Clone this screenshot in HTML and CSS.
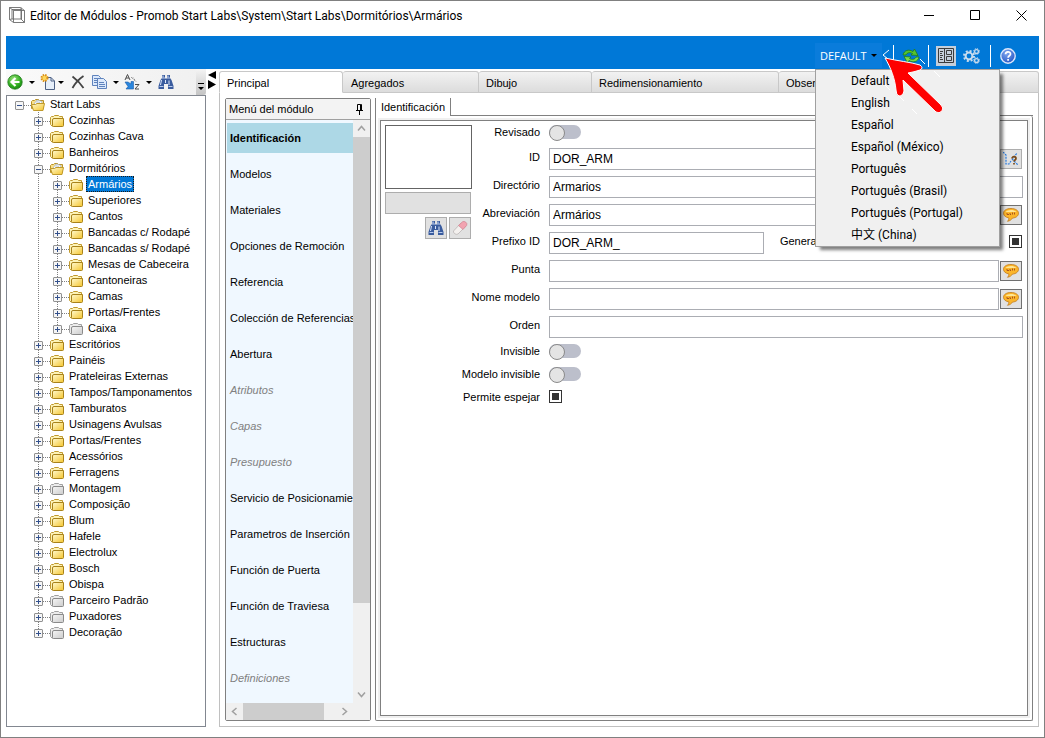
FILE: index.html
```html
<!DOCTYPE html>
<html lang="es">
<head>
    <meta charset="utf-8">
    <title>Editor de Módulos</title>
    <link rel="stylesheet" href="styles.css">
</head>
<body>

<svg class="symbols" aria-hidden="true">
    <defs>
        <linearGradient id="gold" x1="0" y1="0" x2="1" y2="1">
            <stop offset="0" stop-color="#fffad0"/>
            <stop offset="1" stop-color="#f5c52e"/>
        </linearGradient>
        <linearGradient id="silver" x1="0" y1="0" x2="1" y2="1">
            <stop offset="0" stop-color="#f6f6f6"/>
            <stop offset="1" stop-color="#cccccc"/>
        </linearGradient>
        <radialGradient id="green" cx="0.4" cy="0.3" r="0.8">
            <stop offset="0" stop-color="#9be07c"/>
            <stop offset="0.6" stop-color="#2fae1f"/>
            <stop offset="1" stop-color="#167a12"/>
        </radialGradient>
        <radialGradient id="blue" cx="0.4" cy="0.3" r="0.8">
            <stop offset="0" stop-color="#7fa6f0"/>
            <stop offset="1" stop-color="#1d4fc0"/>
        </radialGradient>
    </defs>
    <symbol id="folder" viewBox="0 0 14 12">
        <path d="M.5 9.500v-7l1-1h2l1-1h4l1 1h3v8l-1 1.500H2z" fill="#fdf3b8" stroke="#c19a2e"/>
        <path d="M2.500 5q0-1.500 1.500-1.500h9.500v7q0 1-1 1H3.500q-1 0-1-1z" fill="url(#gold)" stroke="#a8821a"/>
    </symbol>
    <symbol id="folder-gray" viewBox="0 0 14 12">
        <path d="M.5 9.500v-7l1-1h2l1-1h4l1 1h3v8l-1 1.500H2z" fill="#ececec" stroke="#a0a0a0"/>
        <path d="M2.500 5q0-1.500 1.500-1.500h9.500v7q0 1-1 1H3.500q-1 0-1-1z" fill="url(#silver)" stroke="#8a8a8a"/>
    </symbol>
    <symbol id="folder-open" viewBox="0 0 14 12">
        <path d="M.5 9.500v-7l1-1h2l1-1h3l1 1h4v8z" fill="#fbe28a" stroke="#b8922a"/>
        <path d="M3 5l3-4 5 1.500L10 7z" fill="#fff" stroke="#9fb0c4" stroke-width=".7"/>
        <path d="M5 4l3 .5M5.500 2.500l3.500 1" stroke="#8da0b8" stroke-width=".6"/>
        <path d="M2.500 11.500L.5 5.500h4L6 4.500h7.500l-1.500 7z" fill="url(#gold)" stroke="#c09a2c"/>
    </symbol>
    <symbol id="binoculars" viewBox="0 0 16 16">
        <path d="M4 1h3v3l1 1 1-1V1h3v3l1.500 2L15.500 12v3h-5.500v-5H6v5H.5v-3L2.500 6 4 4z" fill="#3a5c9e"/>
        <path d="M4 4h3M9 4h3M1.500 12.500h4M10.500 12.500h4" stroke="#b9cbee"/>
        <path d="M3.500 6l-1 5M11 6.500v4.500M5 1.500v2M10 1.500v2M7.500 6v3" stroke="#dbe6fb"/>
    </symbol>
    <symbol id="speech" viewBox="0 0 16 14">
        <path d="M8 .5c4.500 0 7.500 2 7.500 4.800 0 2.600-2.500 4.500-6 4.800-1 1.500-2.500 2.800-5 3.200 1-1 1.500-2 1.300-3.400C2.500 9.300.5 7.600.5 5.300.5 2.500 3.500.5 8 .5z" fill="#fbb52a" stroke="#c27a18" stroke-width=".8"/>
        <path d="M2.500 4C4 1.500 11 1 13.500 4z" fill="#ffe694"/>
        <path d="M4 5v1.500h2M7 5v1.500h1M9.500 4.500v2M11.500 4.500v2" stroke="#a8541c" fill="none"/>
    </symbol>
</svg>

<div class="window">
    <header class="titlebar">
        <svg class="app-icon" viewBox="0 0 16 16"><path d="M.5.5h11l4 3v12h-11l-4-3zM.5.5l4 3h11M4.500 3.500v12M3 2.500h9.500v9.500H3zM12 .5v11.500l3.500 3.500M.5 12.500L3 12" fill="none" stroke="#6c6c6c" stroke-width=".9"/></svg>
        <h1>Editor de Módulos - Promob Start Labs\System\Start Labs\Dormitórios\Armários</h1>
        <button type="button" aria-label="Minimizar"><svg viewBox="0 0 11 11"><path d="M0 5.500h10"/></svg></button>
        <button type="button" aria-label="Maximizar"><svg viewBox="0 0 11 11"><path d="M.5.5h9v9h-9z"/></svg></button>
        <button type="button" aria-label="Cerrar"><svg viewBox="0 0 11 11"><path d="M.5.5l10 10M10.500.5l-10 10"/></svg></button>
    </header>

    <nav class="bluebar">
        <div class="language">
            <button type="button" class="language-button">DEFAULT <span class="caret"></span></button>
            <ul class="language-menu">
                <li><button type="button">Default</button></li>
                <li><button type="button">English</button></li>
                <li><button type="button">Español</button></li>
                <li><button type="button">Español (México)</button></li>
                <li><button type="button">Português</button></li>
                <li><button type="button">Português (Brasil)</button></li>
                <li><button type="button">Português (Portugal)</button></li>
                <li><button type="button">中文 (China)</button></li>
            </ul>
            <svg class="pointer" viewBox="0 0 64 64" aria-hidden="true">
                <path d="M9 3L3 8l5 4M40 12l5 5M54 24l6 6M5 38l5 5M20 50l4 4M32 62l5 5" fill="none" stroke="#fff" stroke-width="1"/>
                <path d="M5 11C18 14 30 15 40 18q4 3 0 5-6 2-12 3L61 58q3 3 1 6-3 3-6 1L23 33l1 11q-1 5-5 5-3-1-3-6C15 32 11 21 5 11z" fill="#fe0000" stroke="#fff"/>
            </svg>
        </div>
        <span class="separator"></span>
        <button type="button" class="tool" aria-label="Actualizar">
            <svg viewBox="0 0 18 16"><path d="M1 7C2 2 7 1 11 3.500L12.500 1 16 7.500l-7-.5 1.500-1.500C8 4 5 4.500 4 7z" fill="#56c22f" stroke="#1f7d15" stroke-width=".8"/><path d="M17 9c-1 5-6 6-10 3.500L5.500 15 2 8.500l7 .5-1.500 1.500c2.500 1.500 5.500 1 6.500-1.500z" fill="#7bd94a" stroke="#1f7d15" stroke-width=".8"/></svg>
        </button>
        <span class="separator"></span>
        <button type="button" class="tool tool-active" aria-label="Propiedades">
            <svg viewBox="0 0 18 16" fill="none" stroke="#3c3c3c"><path d="M1.500.5h15v14h-15zM7.500.5v14M9.500 2.500h5v4h-5zM9.500 8.500h5v4h-5z"/><path d="M3 3.500h3M3 5.500h2M3 7.500h3M3 9.500h2M3 11.500h3"/></svg>
        </button>
        <button type="button" class="tool" aria-label="Configuración">
            <svg viewBox="0 0 18 16" fill="none" stroke="#c9dcee"><circle cx="6" cy="8" r="3.400" stroke-width="2"/><circle cx="6" cy="8" r="5" stroke-width="2" stroke-dasharray="2 1.930"/><circle cx="13.500" cy="3.500" r="1.900" stroke-width="1.300"/><circle cx="13.500" cy="3.500" r="2.900" stroke-width="1" stroke-dasharray="1.200 1.080"/><circle cx="13.500" cy="12.500" r="1.900" stroke-width="1.300"/><circle cx="13.500" cy="12.500" r="2.900" stroke-width="1" stroke-dasharray="1.200 1.080"/></svg>
        </button>
        <span class="separator"></span>
        <button type="button" class="tool tool-help" aria-label="Ayuda">
            <svg viewBox="0 0 16 16"><circle cx="8" cy="8" r="7.200" fill="url(#blue)" stroke="#dbe6fb" stroke-width="1.400"/><path d="M5.500 6.300c0-3.300 5-3.300 5-.3 0 1.800-2.400 1.800-2.400 3.800M8.100 11v1.800" fill="none" stroke="#fff" stroke-width="1.700"/></svg>
        </button>
    </nav>

    <div class="workspace">
        <aside class="explorer">
            <div class="toolbar">
                <button type="button" aria-label="Volver"><svg viewBox="0 0 16 16"><circle cx="8" cy="8" r="7.200" fill="url(#green)" stroke="#1d7a17" stroke-width=".8"/><path d="M12.500 8H5M8.500 4L4.500 8l4 4" fill="none" stroke="#fff" stroke-width="2.200"/></svg></button>
                <button type="button" class="drop" aria-label="Más"><span class="caret"></span></button>
                <button type="button" aria-label="Nuevo"><svg viewBox="0 0 16 16"><path d="M5.500 3.500h5.500l3.500 3.500v8.500h-9z" fill="#e6effa" stroke="#4d6185"/><path d="M11 3.500v3.500h3.500" fill="none" stroke="#4d6185"/><circle cx="4.500" cy="4" r="3" fill="#ffd75a" stroke="#d98f1a" stroke-width="2" stroke-dasharray="1.400 1"/></svg></button>
                <button type="button" class="drop drop-narrow" aria-label="Más"><span class="caret"></span></button>
                <button type="button" class="delete" aria-label="Eliminar"><svg viewBox="0 0 16 16"><path d="M2.500 2.500c4 3 8 7 11 11.500M13.500 2C9 5 5 9.500 2.500 14" fill="none" stroke="#444" stroke-width="1.800"/></svg></button>
                <button type="button" class="copy" aria-label="Copiar"><svg viewBox="0 0 16 16" fill="#dce9fb" stroke="#5f83bd"><path d="M1.500 1.500h6l2 2v8h-8z"/><path d="M3 4.500h4M3 6.500h4M3 8.500h4"/><path d="M6.500 4.500h6l3 3v7h-9z"/><path d="M8 8.500h5M8 10.500h6M8 12.500h6"/></svg></button>
                <button type="button" class="drop" aria-label="Más"><span class="caret"></span></button>
                <button type="button" aria-label="Ordenar"><svg viewBox="0 0 16 16"><path d="M1 6L3.500.5 6 6M2 4h3M11 10.500h4L11 15h4" fill="none" stroke="#4b4b4b"/><path d="M7 3l4 4M9 3.500l3 4" stroke="#777" stroke-dasharray="1 1"/><path d="M1 8h3l3 2V7.500h2.500V15H2l2-2.500z" fill="#2a86dd" stroke="#1b5aa8" stroke-width=".6"/></svg></button>
                <button type="button" class="drop drop-wide" aria-label="Más"><span class="caret"></span></button>
                <button type="button" aria-label="Buscar"><svg viewBox="0 0 16 16"><use href="#binoculars"/></svg></button>
                <button type="button" class="overflow" aria-label="Opciones"><svg viewBox="0 0 10 10"><path d="M2 1h6v1H2zM2 5h6L5 8z"/></svg></button>
            </div>
            <ul class="tree" id="tree"></ul>
        </aside>

        <div class="splitter">
            <svg viewBox="0 0 8 18"><path d="M8 0v8L0 4zM0 9v9l8-4.500z"/></svg>
        </div>

        <main class="editor">
            <div class="tabs">
                <button type="button" class="tab tab-active">Principal</button>
                <button type="button" class="tab tab-aggregates">Agregados</button>
                <button type="button" class="tab tab-drawing">Dibujo</button>
                <button type="button" class="tab tab-resize">Redimensionamiento</button>
                <button type="button" class="tab tab-notes">Obser</button>
            </div>

            <div class="editor-body">
                <section class="module-menu">
                    <h2>Menú del módulo
                        <svg viewBox="0 0 9 11"><path d="M2.500 6.500v-6h3v6M5.500.5h1v6M1 6.500h7M4.500 7v4" fill="none" stroke="#000"/></svg>
                    </h2>
                    <div class="module-scroll">
                        <ul>
                            <li><a href="#" class="current">Identificación</a></li>
                            <li><a href="#">Modelos</a></li>
                            <li><a href="#">Materiales</a></li>
                            <li><a href="#">Opciones de Remoción</a></li>
                            <li><a href="#">Referencia</a></li>
                            <li><a href="#">Colección de Referencias</a></li>
                            <li><a href="#">Abertura</a></li>
                            <li><a href="#" class="disabled">Atributos</a></li>
                            <li><a href="#" class="disabled">Capas</a></li>
                            <li><a href="#" class="disabled">Presupuesto</a></li>
                            <li><a href="#">Servicio de Posicionamie</a></li>
                            <li><a href="#">Parametros de Inserción</a></li>
                            <li><a href="#">Función de Puerta</a></li>
                            <li><a href="#">Función de Traviesa</a></li>
                            <li><a href="#">Estructuras</a></li>
                            <li><a href="#" class="disabled">Definiciones</a></li>
                        </ul>
                        <div class="scrollbar scrollbar-y">
                            <svg viewBox="0 0 17 17"><path d="M5 10.500l3.500-4 3.500 4"/></svg>
                            <span class="thumb"></span>
                            <svg viewBox="0 0 17 17"><path d="M5 6.500l3.500 4 3.500-4"/></svg>
                        </div>
                        <div class="scrollbar scrollbar-x">
                            <svg viewBox="0 0 17 17"><path d="M10.500 5l-4 3.500 4 3.500"/></svg>
                            <span class="thumb"></span>
                            <svg viewBox="0 0 17 17"><path d="M6.500 5l4 3.500-4 3.500"/></svg>
                        </div>
                    </div>
                </section>

                <section class="identity">
                    <div class="subtabs">
                        <button type="button">Identificación</button>
                    </div>
                    <div class="identity-frame">
                        <div class="identity-content">
                            <div class="thumbnail">
                                <div class="preview"></div>
                                <div class="preview-name"></div>
                                <div class="preview-actions">
                                    <button type="button" aria-label="Buscar imagen"><svg viewBox="0 0 16 16"><use href="#binoculars"/></svg></button>
                                    <button type="button" aria-label="Borrar imagen"><svg viewBox="0 0 16 16"><path d="M1.500 11L9 3l4.500 3.500-7.500 7.500q-2 1-3.500-.5T1.500 11z" fill="#f3f0ee" stroke="#b3aeae" stroke-width=".7"/><path d="M6.500 5.500L10.500 1.800q1.500-1 3.300.4t.8 3.300L11 9.500z" fill="#f2a3b0" stroke="#d0808e" stroke-width=".7"/></svg></button>
                                </div>
                            </div>
                            <form class="fields">
                                <div class="field switch-field">
                                    <label for="revisado">Revisado</label>
                                    <input type="checkbox" class="switch" id="revisado">
                                </div>
                                <div class="field">
                                    <label for="module-id">ID</label>
                                    <input type="text" id="module-id" value="DOR_ARM">
                                    <button type="button" class="flat" aria-label="Generar ID"><svg viewBox="0 0 16 14"><path d="M0 0l3 3v9h3l2-3M9 8l5-7M9 7l6 6" fill="none" stroke="#277be0" stroke-width="1.200" stroke-dasharray="2 1"/><path d="M9 6.500c0-2.500 4-2.500 4 0 0 1.500-2 1.500-2 3M11 11v1.500" fill="none" stroke="#7a4a18" stroke-width="1.700"/></svg></button>
                                </div>
                                <div class="field">
                                    <label for="directorio">Directório</label>
                                    <input type="text" id="directorio" value="Armarios">
                                </div>
                                <div class="field">
                                    <label for="abreviacion">Abreviación</label>
                                    <input type="text" id="abreviacion" value="Armários">
                                    <button type="button" aria-label="Traducir"><svg viewBox="0 0 16 14"><use href="#speech"/></svg></button>
                                </div>
                                <div class="field">
                                    <label for="prefixo">Prefixo ID</label>
                                    <input type="text" class="short" id="prefixo" value="DOR_ARM_">
                                    <label for="genera" class="auto-label">Genera</label>
                                    <input type="checkbox" class="box" id="genera" checked>
                                </div>
                                <div class="field">
                                    <label for="punta">Punta</label>
                                    <input type="text" id="punta">
                                    <button type="button" aria-label="Traducir"><svg viewBox="0 0 16 14"><use href="#speech"/></svg></button>
                                </div>
                                <div class="field">
                                    <label for="nome">Nome modelo</label>
                                    <input type="text" id="nome">
                                    <button type="button" aria-label="Traducir"><svg viewBox="0 0 16 14"><use href="#speech"/></svg></button>
                                </div>
                                <div class="field">
                                    <label for="orden">Orden</label>
                                    <input type="text" id="orden">
                                </div>
                                <div class="field switch-field">
                                    <label for="invisible">Invisible</label>
                                    <input type="checkbox" class="switch" id="invisible">
                                </div>
                                <div class="field switch-field">
                                    <label for="modelo-invisible">Modelo invisible</label>
                                    <input type="checkbox" class="switch" id="modelo-invisible">
                                </div>
                                <div class="field switch-field">
                                    <label for="espejar">Permite espejar</label>
                                    <input type="checkbox" class="box" id="espejar" checked>
                                </div>
                            </form>
                        </div>
                    </div>
                </section>
            </div>
        </main>
    </div>
</div>

<script>
    const folders = [
        { name: 'Start Labs', open: true, children: [
            { name: 'Cozinhas' },
            { name: 'Cozinhas Cava' },
            { name: 'Banheiros' },
            { name: 'Dormitórios', open: true, children: [
                { name: 'Armários', selected: true },
                { name: 'Superiores' },
                { name: 'Cantos' },
                { name: 'Bancadas c/ Rodapé' },
                { name: 'Bancadas s/ Rodapé' },
                { name: 'Mesas de Cabeceira' },
                { name: 'Cantoneiras' },
                { name: 'Camas' },
                { name: 'Portas/Frentes' },
                { name: 'Caixa', gray: true }
            ] },
            { name: 'Escritórios' },
            { name: 'Painéis' },
            { name: 'Prateleiras Externas' },
            { name: 'Tampos/Tamponamentos' },
            { name: 'Tamburatos' },
            { name: 'Usinagens Avulsas' },
            { name: 'Portas/Frentes' },
            { name: 'Acessórios' },
            { name: 'Ferragens' },
            { name: 'Montagem', gray: true },
            { name: 'Composição' },
            { name: 'Blum' },
            { name: 'Hafele' },
            { name: 'Electrolux' },
            { name: 'Bosch' },
            { name: 'Obispa' },
            { name: 'Parceiro Padrão', gray: true },
            { name: 'Puxadores', gray: true },
            { name: 'Decoração', gray: true }
        ] }
    ];

    function renderFolder(folder) {
        const icon = folder.open ? 'folder-open' : folder.gray ? 'folder-gray' : 'folder';
        const children = folder.children ? '<ul>' + folder.children.map(renderFolder).join('') + '</ul>' : '';
        return '<li><div class="node">' +
            '<button type="button" class="expander' + (folder.open ? ' open' : '') + '" aria-label="' + folder.name + '"></button>' +
            '<svg viewBox="0 0 14 12"><use href="#' + icon + '"/></svg>' +
            '<span class="name' + (folder.selected ? ' selected' : '') + '">' + folder.name + '</span>' +
            '</div>' + children + '</li>';
    }

    document.getElementById('tree').innerHTML = folders.map(renderFolder).join('');
</script>

</body>
</html>
```
FILE: styles.css
```css
* {
    box-sizing: border-box;
}

body {
    margin: 0;
    font-family: "Liberation Sans", Arial, sans-serif;
    font-size: 11px;
    line-height: 16px;
    color: #000;
    background-color: #fff;
}

button, input {
    margin: 0;
    padding: 0;
    border: none;
    background: none;
    font: inherit;
    color: inherit;
}

ul {
    list-style: none;
    margin: 0;
    padding: 0;
}

svg {
    display: block;
    flex: none;
}

.symbols {
    position: absolute;
    width: 0;
    height: 0;
}

.window {
    display: flex;
    flex-direction: column;
    height: 100vh;
    padding: 0 5px 10px;
    border: 1px solid #808080;
}

/* title bar */
.titlebar {
    display: flex;
    align-items: flex-start;
    height: 35px;
    margin-right: -5px;
}

.app-icon {
    width: 16px;
    height: 16px;
    margin: 6px 5px 0 3px;
}

.titlebar h1 {
    flex: 1;
    margin: 0;
    font-family: Roboto, "Noto Sans", sans-serif;
    font-size: 12px;
    font-weight: normal;
    line-height: 30px;
    white-space: nowrap;
}

.titlebar button {
    display: flex;
    align-items: center;
    justify-content: center;
    width: 46px;
    height: 29px;
}

.titlebar button svg {
    width: 11px;
    height: 11px;
    fill: none;
    stroke: #000;
}

/* blue bar */
.bluebar {
    display: flex;
    align-items: center;
    justify-content: flex-end;
    height: 33px;
    padding: 6px 21px 0 0;
    background-color: #0078d7;
}

.caret {
    display: block;
    border: 3px solid transparent;
    border-top-color: #000;
    border-bottom-width: 0;
}

.language {
    position: relative;
    margin-right: 11px;
    font-family: Roboto, "Noto Sans", "Noto Sans CJK SC", sans-serif;
    font-size: 12px;
}

.language-button {
    display: flex;
    align-items: center;
    gap: 4px;
    width: 67px;
    height: 25px;
    padding-left: 5px;
    font-family: "Open Sans", "Noto Sans", sans-serif;
    font-size: 11px;
    color: #fff;
    background-color: #0a7cdb;
}

.language-menu {
    position: absolute;
    z-index: 2;
    top: 26px;
    left: 0;
    width: 185px;
    border: 1px solid #a0a0a0;
    background-color: #f0f0f0;
    box-shadow: 4px 4px 3px -1px rgba(0, 0, 0, 0.5);
}

.language-menu button {
    display: block;
    width: 100%;
    height: 22px;
    padding-left: 35px;
    text-align: left;
    white-space: nowrap;
}

.pointer {
    position: absolute;
    z-index: 3;
    top: 4px;
    left: 65px;
    width: 64px;
    height: 64px;
    overflow: visible;
}

.separator {
    width: 1px;
    height: 22px;
    background-color: #fff;
}

.tool {
    display: flex;
    align-items: center;
    justify-content: center;
    width: 20px;
    height: 20px;
    margin: 0 7px;
}

.tool svg {
    width: 18px;
    height: 16px;
}

.tool + .tool {
    margin-left: -1px;
    margin-right: 8px;
}

.tool-active {
    background-color: #c6cfda;
}

.tool-help {
    margin-right: 0;
}

/* explorer */
.workspace {
    display: flex;
    flex: 1;
    min-height: 0;
}

.explorer {
    display: flex;
    flex-direction: column;
    width: 200px;
}

.toolbar {
    display: flex;
    align-items: center;
    height: 26px;
    padding-left: 1px;
    background: linear-gradient(to right, #fafafa, #f0f0f0);
}

.toolbar button {
    width: 16px;
    height: 16px;
}

.toolbar .drop {
    display: flex;
    align-items: center;
    justify-content: center;
    width: 17px;
}

.toolbar .drop-narrow {
    width: 9px;
}

.toolbar .drop-wide {
    width: 18px;
}

.toolbar .delete {
    margin: 0 5px;
}

.toolbar svg {
    width: 16px;
    height: 16px;
}

.toolbar .overflow {
    display: flex;
    align-items: flex-end;
    align-self: stretch;
    width: 10px;
    height: auto;
    margin-left: auto;
    padding-bottom: 3px;
    border-radius: 0 0 3px 0;
    background: linear-gradient(#f4f4f4, #c4c4c4);
}

.overflow svg {
    width: 10px;
    height: 10px;
}

.tree {
    flex: 1;
    overflow: hidden;
    padding: 0 0 0 8px;
    border: 1px solid #828790;
    background-color: #fff;
}

.tree ul {
    margin-left: 4px;
    padding-left: 15px;
}

.tree ul li {
    background: repeating-linear-gradient(#808080 0 1px, transparent 1px 2px) 4px 0 / 1px 100% no-repeat;
}

.tree ul li:last-child {
    background-size: 1px 9px;
}

.node {
    display: flex;
    align-items: center;
    height: 16px;
}

.node svg {
    width: 14px;
    height: 12px;
    margin-top: 2px;
}

.expander {
    flex: none;
    width: 9px;
    height: 9px;
    margin-top: 2px;
    border: 1px solid #919191;
    border-radius: 1px;
    background:
        linear-gradient(#33508c, #33508c) center / 5px 1px no-repeat,
        linear-gradient(#33508c, #33508c) center / 1px 5px no-repeat,
        #f6f6f6;
}

.expander.open {
    background: linear-gradient(#33508c, #33508c) center / 5px 1px no-repeat, #f6f6f6;
}

.expander + svg {
    margin-left: 7px;
}

.node::before {
    content: "";
    order: 1;
    width: 7px;
    height: 1px;
    margin: 2px -7px 0 0;
    background: repeating-linear-gradient(to right, #808080 0 1px, transparent 1px 2px);
}

.node svg, .node .name {
    order: 2;
}

.name {
    padding: 0 2px;
    margin-left: 3px;
    line-height: 16px;
    white-space: nowrap;
}

.name.selected {
    color: #fff;
    background-color: #0078d7;
    outline: 1px dotted #1a1a1a;
    outline-offset: -1px;
}

.splitter {
    width: 13px;
    padding: 2px 0 0 2px;
}

.splitter svg {
    width: 8px;
    height: 18px;
}

/* editor */
.editor {
    display: flex;
    flex: 1;
    flex-direction: column;
    min-width: 0;
}

.tabs {
    display: flex;
    height: 24px;
    padding-top: 2px;
}

.tab {
    width: 124px;
    padding: 1px 0 0 7px;
    border: 1px solid #c8c8c8;
    border-left: none;
    border-radius: 3px 3px 0 0;
    text-align: left;
    white-space: nowrap;
    overflow: hidden;
    background: linear-gradient(#f2f2f2, #dcdcdc);
}

.tab-active {
    border-left: 1px solid #c8c8c8;
    border-bottom-color: #fff;
    background: #fff;
}

.tab-aggregates {
    width: 136px;
    padding-left: 8px;
}

.tab-drawing {
    width: 113px;
}

.tab-resize {
    width: 187px;
}

.tab-notes {
    flex: 1;
}

.editor-body {
    display: flex;
    flex: 1;
    gap: 4px;
    min-height: 0;
    padding: 5px;
    border: 1px solid #c0c0c0;
    border-top: none;
}

.module-menu {
    display: flex;
    flex-direction: column;
    width: 146px;
    border: 1px solid #808080;
    border-radius: 2px;
}

.module-menu h2 {
    display: flex;
    align-items: center;
    justify-content: space-between;
    height: 21px;
    margin: 0;
    padding: 0 6px 0 3px;
    border-bottom: 1px solid #a0a0a0;
    font-size: 11px;
    font-weight: normal;
    background-color: #f3f3f3;
}

.module-menu h2 svg {
    width: 9px;
    height: 11px;
}

.module-scroll {
    display: grid;
    flex: 1;
    grid-template-columns: 1fr 17px;
    grid-template-rows: 1fr 17px;
    min-height: 0;
    background-color: #f0f0f0;
}

.module-scroll ul {
    overflow: hidden;
    padding: 3px 0 0 1px;
    background-color: #f0f8ff;
}

.module-scroll li {
    margin-bottom: 6px;
}

.module-scroll a {
    display: block;
    padding-left: 3px;
    line-height: 30px;
    color: #000;
    text-decoration: none;
    white-space: nowrap;
}

.module-scroll .current {
    font-weight: bold;
    background-color: #add8e6;
}

.module-scroll .disabled {
    font-style: italic;
    color: #808080;
}

.scrollbar {
    display: flex;
}

.scrollbar-y {
    flex-direction: column;
    justify-content: space-between;
}

.scrollbar-x {
    justify-content: space-between;
}

.scrollbar svg {
    width: 17px;
    height: 17px;
    fill: none;
    stroke: #a0a0a0;
    stroke-width: 1.5;
}

.thumb {
    background-color: #cdcdcd;
}

.scrollbar-y .thumb {
    height: 80%;
    margin-bottom: auto;
}

.scrollbar-x .thumb {
    width: 64%;
    margin-right: auto;
}

/* identification panel */
.identity {
    display: flex;
    flex: 1;
    flex-direction: column;
    min-width: 0;
}

.subtabs {
    display: flex;
    height: 18px;
}

.subtabs::after {
    content: "";
    flex: 1;
    border-bottom: 1px solid #808080;
}

.subtabs button {
    width: 76px;
    border: solid #808080;
    border-width: 0 1px;
    text-align: center;
}

.identity-frame {
    display: flex;
    flex: 1;
    padding: 4px;
    border: 1px solid #808080;
    border-top: none;
    border-radius: 0 2px 2px 2px;
}

.identity-content {
    display: flex;
    flex: 1;
    align-items: flex-start;
    min-width: 0;
    padding: 4px;
    border: 1px solid #808080;
    box-shadow: 0 0 0 2px #f0f0f0;
}

.thumbnail {
    flex: none;
    width: 87px;
}

.preview {
    height: 64px;
    border: 1px solid #646464;
}

.preview-name {
    height: 22px;
    margin: 3px 1px 3px 0;
    border: 1px solid #adadad;
    background-color: #e1e1e1;
}

.preview-actions {
    display: flex;
    justify-content: flex-end;
    gap: 2px;
    margin-right: 1px;
}

.preview-actions button, .field button {
    display: flex;
    align-items: center;
    justify-content: center;
    width: 22px;
    height: 22px;
    border: 1px solid #adadad;
    background-color: #e1e1e1;
}

.preview-actions svg {
    width: 16px;
    height: 16px;
}

.fields {
    flex: 1;
    min-width: 0;
}

.field {
    display: flex;
    align-items: flex-start;
    height: 22px;
    margin-bottom: 6px;
}

.switch-field {
    height: 23px;
    margin-bottom: 0;
}

/* long captions run out to the left, under the thumbnail */
.field label {
    display: flex;
    flex: none;
    justify-content: flex-end;
    width: 68px;
    margin-right: 9px;
    line-height: 18px;
    white-space: nowrap;
}

.switch-field label {
    line-height: 14px;
}

.field input[type="text"] {
    flex: 1;
    min-width: 0;
    height: 22px;
    padding: 0 3px;
    border: 1px solid #abadb3;
    font-size: 12px;
    background-color: #fff;
}

.field input.short {
    flex: none;
    width: 39%;
}

.field .auto-label {
    flex: 1;
    justify-content: flex-start;
    margin: 0 0 0 16px;
}

.field button {
    height: 20px;
    margin: 1px 1px 0;
    border-color: #707070;
}

.field .flat {
    border-color: #adadad;
}

.field button svg {
    width: 16px;
    height: 14px;
}

.switch {
    appearance: none;
    width: 32px;
    height: 14px;
    border-radius: 7px;
    background-color: #bcbfcb;
}

.switch::before {
    content: "";
    display: block;
    width: 14px;
    height: 14px;
    border: 1px solid #8a8a8a;
    border-radius: 50%;
    background-color: #e4e4e4;
}

.box {
    appearance: none;
    width: 13px;
    height: 13px;
    border: 1px solid #333;
    background: linear-gradient(#333, #333) center / 7px 7px no-repeat;
}

.field .auto-label + .box {
    margin: 3px 1px 0 0;
}
```
